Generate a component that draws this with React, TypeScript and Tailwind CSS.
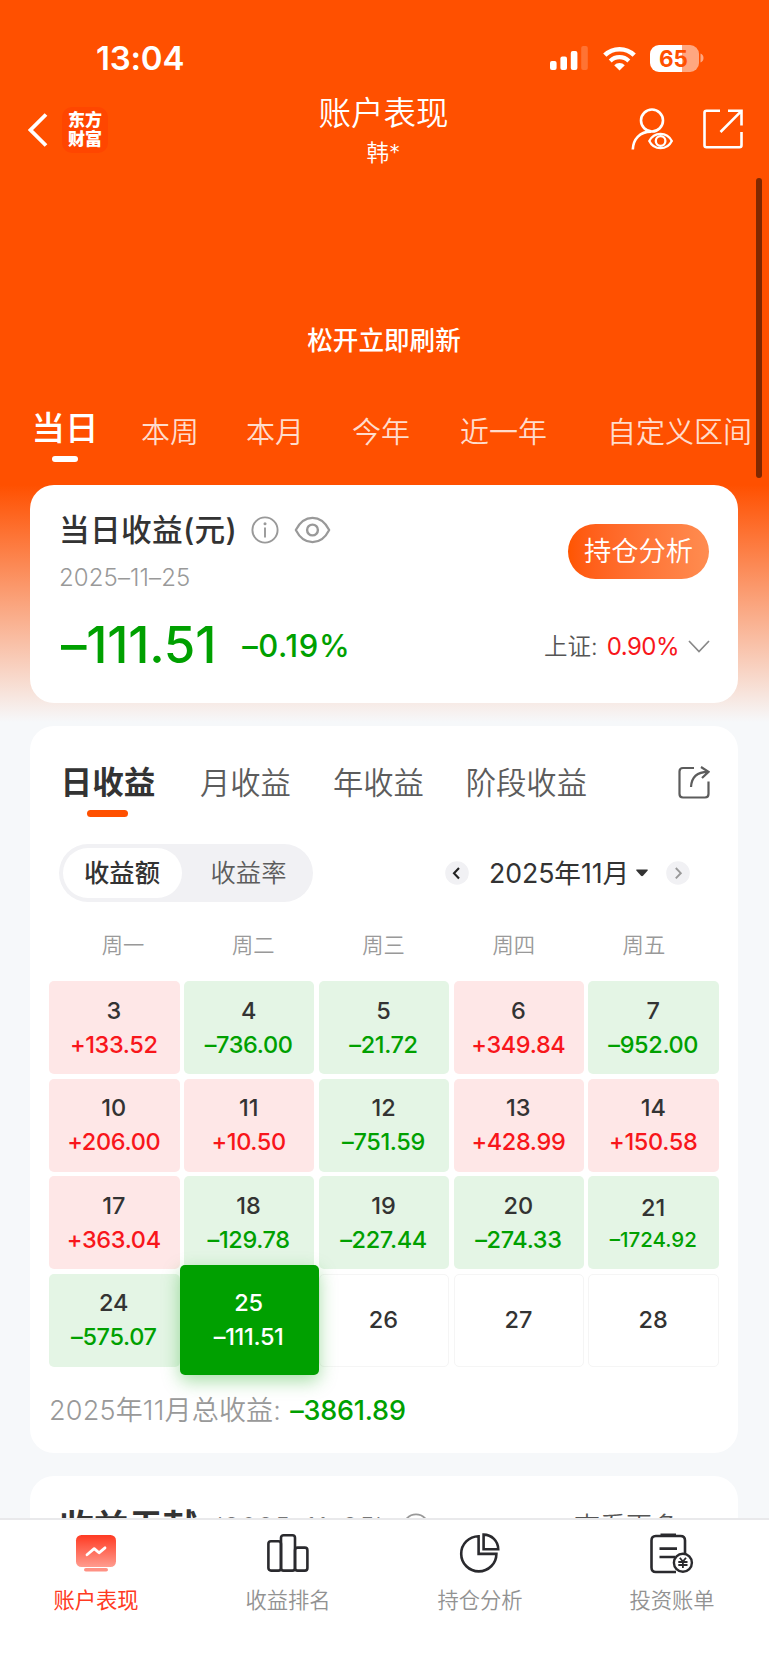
import { useState } from 'react'
import clsx from 'clsx'

type Day = { day: number; value?: string }

const ranges = [
  { label: '本周', className: 'ml-[43px]' },
  { label: '本月', className: 'ml-[47px]' },
  { label: '今年', className: 'ml-[48px]' },
  { label: '近一年', className: 'ml-[50px]' },
  { label: '自定义区间', className: 'ml-[60px]' },
]

const weekdays = ['周一', '周二', '周三', '周四', '周五']

const days: Day[] = [
  { day: 3, value: '+133.52' },
  { day: 4, value: '–736.00' },
  { day: 5, value: '–21.72' },
  { day: 6, value: '+349.84' },
  { day: 7, value: '–952.00' },
  { day: 10, value: '+206.00' },
  { day: 11, value: '+10.50' },
  { day: 12, value: '–751.59' },
  { day: 13, value: '+428.99' },
  { day: 14, value: '+150.58' },
  { day: 17, value: '+363.04' },
  { day: 18, value: '–129.78' },
  { day: 19, value: '–227.44' },
  { day: 20, value: '–274.33' },
  { day: 21, value: '–1724.92' },
  { day: 24, value: '–575.07' },
  { day: 25, value: '–111.51' },
  { day: 26 },
  { day: 27 },
  { day: 28 },
]

function StatusBar() {
  return (
    <div className="flex h-[84px] items-start pt-[40px] pl-[96px] pr-[64px]">
      <span className="text-[33px] leading-[36px] font-semibold tracking-[-0.2px]">13:04</span>
      <div className="ml-auto flex h-[36px] items-center">
        <svg width="38" height="24" viewBox="0 0 38 24" fill="#fff">
          <rect x="0" y="15" width="6.6" height="9" rx="2" />
          <rect x="10.4" y="10.5" width="6.6" height="13.5" rx="2" />
          <rect x="20.8" y="5" width="6.6" height="19" rx="2" />
          <rect x="31.2" y="0" width="6.6" height="24" rx="2" opacity="0.2" />
        </svg>
        <svg className="ml-[15px]" width="33" height="25" viewBox="0 0 33 25" fill="none" stroke="#fff">
          <path d="M1.8 9.2a21 21 0 0 1 29.4 0" strokeWidth="4.6" />
          <path d="M7.2 14.9a13.4 13.4 0 0 1 18.6 0" strokeWidth="4.2" />
          <path d="M11.2 19.2a7.8 7.8 0 0 1 10.6 0L16.5 24.6z" fill="#fff" stroke="none" />
        </svg>
        <div className="ml-[14px] flex h-[27px] w-[49px] items-center justify-center rounded-[9px] bg-[linear-gradient(90deg,#fff_66%,#ffa780_66%)] pr-[2px] text-[22.5px] leading-[27px] font-bold text-[#ff5000]">
          65
        </div>
        <svg className="ml-[1px]" width="4" height="10" viewBox="0 0 4 10">
          <path d="M0.5 0.5C4.5 2 4.5 8 0.5 9.5z" fill="#ffa780" />
        </svg>
      </div>
    </div>
  )
}

function NavBar() {
  return (
    <div className="grid h-[90px] grid-cols-[1fr_auto_1fr] pl-[28px] pr-[25px]">
      <div className="flex items-center pt-[1px]">
        <svg width="20" height="34" viewBox="0 0 20 34" fill="none" stroke="#fff" strokeWidth="3.8">
          <path d="M18 1.5 2.5 17 18 32.5" />
        </svg>
        <div className="ml-[14px] flex h-[46px] w-[46px] flex-col items-center justify-center rounded-[10px] bg-[#ff4600] text-[17px] leading-[19px] font-black">
          <span>东方</span>
          <span>财富</span>
        </div>
      </div>
      <div className="flex flex-col items-center pt-[10px] pr-[4px]">
        <h1 className="text-[32.5px] leading-[40px] font-[350]">账户表现</h1>
        <span className="mt-[4px] text-[22.5px] leading-[30px] font-[350]">韩*</span>
      </div>
      <div className="flex items-center justify-end">
        <svg width="42" height="42" viewBox="0 0 42 42" fill="none" stroke="#fff" strokeWidth="2.6">
          <circle cx="21" cy="12.5" r="11" />
          <path d="M1.8 41.5C2.2 31 9 23.6 20 23.6" />
          <path d="M18.3 33C23 23.4 36 23.4 40.8 33 36 42.6 23 42.6 18.3 33z" strokeWidth="2.3" />
          <circle cx="29.6" cy="33" r="4.8" strokeWidth="2.3" />
        </svg>
        <svg className="ml-[30px]" width="40" height="40" viewBox="0 0 40 40" fill="none" stroke="#fff" strokeWidth="2.6">
          <path d="M17 1.8H3.5Q1.5 1.8 1.5 3.8V36.2Q1.5 38.2 3.5 38.2H36.5Q38.5 38.2 38.5 36.2V23" />
          <path d="M25 1.8H38.5V16.5M38 2.3 17.5 23" />
        </svg>
      </div>
    </div>
  )
}

function InfoIcon() {
  return (
    <svg width="28" height="28" viewBox="0 0 28 28" fill="none" stroke="#999" strokeWidth="1.9">
      <circle cx="14" cy="14" r="12.6" />
      <path d="M14 11.5V21.5" />
      <circle cx="14" cy="7.8" r="1.5" fill="#999" stroke="none" />
    </svg>
  )
}

function SummaryCard() {
  return (
    <section className="mx-[30px] mt-[23px] h-[218px] rounded-[24px] bg-white pl-[29px] pr-[29px]">
      <div className="flex justify-between">
        <div className="pt-[27px]">
          <div className="flex h-[36px] items-center">
            <h2 className="text-[30.7px] leading-[36px] font-medium tracking-[0.3px] text-[#333]">当日收益(元)</h2>
            <div className="ml-[14px]">
              <InfoIcon />
            </div>
            <svg className="ml-[15px]" width="37" height="28" viewBox="0 0 37 28" fill="none" stroke="#999" strokeWidth="2.2">
              <path d="M1.8 14C10-2.2 27-2.2 35.2 14 27 30.2 10 30.2 1.8 14z" strokeLinejoin="round" />
              <circle cx="18.5" cy="14" r="5.4" strokeWidth="2.4" />
            </svg>
          </div>
          <div className="mt-[18px] text-[24px] leading-[24px] font-[350] tracking-[0.1px] text-[#999]">2025–11–25</div>
        </div>
        <button className="mt-[39px] h-[55px] w-[141px] rounded-full bg-linear-to-r from-[#ff5500] to-[#ff8c50] text-[27.3px] leading-[55px] font-[350] text-white">
          持仓分析
        </button>
      </div>
      <div className="mt-[29px] flex h-[50px] items-center pt-[2px] pl-[2px] text-[#00a000]">
        <span className="text-[51px] leading-[50px] font-medium tracking-[-0.2px]">–111.51</span>
        <span className="ml-[26px] pt-[2px] text-[31px] leading-[36px] font-medium tracking-[0.6px]">–0.19%</span>
        <span className="ml-auto pt-[4px] text-[23.5px] leading-[30px] font-[350] text-[#555]">上证:</span>
        <span className="ml-[9px] pt-[4px] text-[24px] leading-[30px] tracking-[-0.5px] text-[#f8161b]">0.90%</span>
        <svg className="mt-[2px] ml-[9px] -mr-[1px]" width="22" height="13" viewBox="0 0 22 13" fill="none" stroke="#888" strokeWidth="1.7">
          <path d="M1 1 11 11.5 21 1" />
        </svg>
      </div>
    </section>
  )
}

function DayCell({ item, selected, onSelect }: { item: Day; selected: boolean; onSelect: () => void }) {
  const up = item.value?.startsWith('+')
  return (
    <button
      onClick={onSelect}
      className={clsx(
        'flex flex-col items-center justify-center rounded-[5px] text-[23.5px] leading-[34px]',
        selected && '-mx-[4.3px] -my-[8.3px] z-10 bg-[#00a000] text-white shadow-[0_6px_18px_rgba(0,160,0,0.35)]',
        !selected && !item.value && 'border border-[#f5f5f5] text-[#333]',
        !selected && item.value && (up ? 'bg-[#fee7e7] text-[#f8161b]' : 'bg-[#e4f5e5] text-[#00a000]'),
      )}
    >
      <span className={clsx('pr-[1px] font-medium', selected ? 'text-white' : 'text-[#333]')}>{item.day}</span>
      {item.value && (
        <span
          className={clsx(
            'pr-[1px] font-medium',
            item.value.length > 7 ? 'text-[20.5px] leading-[30px] tracking-[0px]' : 'tracking-[-0.35px]',
          )}
        >
          {item.value}
        </span>
      )}
    </button>
  )
}

function CalendarCard() {
  const [selected, setSelected] = useState(25)

  return (
    <section className="mx-[30px] mt-[23px] h-[727px] rounded-[24px] bg-white">
      <div className="flex h-[91px] pl-[31px] pr-[28px] pt-[39px] text-[30.3px] leading-[36px] font-[350] whitespace-nowrap text-[#5c5c5c]">
        <div className="flex w-[94px] flex-col items-center">
          <span className="text-[31.6px] font-bold text-[#333]">日收益</span>
          <i className="mt-[9px] -ml-[1px] block h-[7px] w-[41px] rounded-full bg-[#ff5000]" />
        </div>
        <span className="ml-[45px]">月收益</span>
        <span className="ml-[42px]">年收益</span>
        <span className="ml-[42px]">阶段收益</span>
        <svg className="mt-[1px] ml-auto" width="32" height="33" viewBox="0 0 32 33" fill="none" stroke="#5c5c5c" strokeWidth="2.2">
          <path d="M16 2H5Q1.5 2 1.5 5.5V28Q1.5 31.5 5 31.5H27Q30.5 31.5 30.5 28V15.5" />
          <path d="M13 21C13.5 11.5 19 5.8 30 5.8M23 1 30.5 5.8 24 12" />
        </svg>
      </div>

      <div className="mt-[27px] flex h-[58px] items-center pl-[29px] pr-[48px]">
        <div className="flex h-[58px] w-[254px] items-center rounded-full bg-[#f1f1f4] pl-[4px] text-[25.3px] leading-[50px]">
          <span className="h-[50px] w-[119px] rounded-full bg-white pr-[1px] text-center font-medium text-[#333]">收益额</span>
          <span className="flex-1 pl-[2px] text-center font-[350] text-[#5c5c5c]">收益率</span>
        </div>
        <svg className="ml-auto" width="24" height="24" viewBox="0 0 24 24" fill="none">
          <circle cx="12" cy="12" r="11.8" fill="#f1f1f4" />
          <path d="M14 7 9 12.2 14 17.4" stroke="#222" strokeWidth="2.1" />
        </svg>
        <span className="ml-[20px] text-[26.7px] leading-[36px] tracking-[-0.1px] text-[#333]">2025年11月</span>
        <svg className="ml-[7px]" width="12" height="8" viewBox="0 0 12 8" fill="#333">
          <path d="M0.6 0.5H11.4Q12.2 1 11.5 1.8L7 6.7Q6 7.6 5 6.7L0.5 1.8Q-0.2 1 0.6 0.5z" />
        </svg>
        <svg className="ml-[18px]" width="24" height="24" viewBox="0 0 24 24" fill="none">
          <circle cx="12" cy="12" r="11.8" fill="#f1f1f4" />
          <path d="M9.8 7 14.8 12.2 9.8 17.4" stroke="#999" strokeWidth="1.9" />
        </svg>
      </div>

      <div className="mr-[29px] ml-[28px] mt-[27px] grid grid-cols-5 text-center text-[21.3px] leading-[32px] font-[350] text-[#999]">
        {weekdays.map((d) => (
          <span key={d}>{d}</span>
        ))}
      </div>

      <div className="mx-[19px] mt-[20px] grid auto-rows-[93.3px] grid-cols-5 gap-[4.3px]">
        {days.map((d) => (
          <DayCell key={d.day} item={d} selected={d.day === selected} onSelect={() => setSelected(d.day)} />
        ))}
      </div>

      <div className="mt-[26px] flex items-center pl-[19px] text-[27px] leading-[36px]">
        <span className="font-[350] tracking-[0.2px] text-[#999]">2025年11月总收益:</span>
        <span className="ml-[9px] font-medium tracking-[-0.2px] text-[#00a000]">–3861.89</span>
      </div>
    </section>
  )
}

function TabBar() {
  const items = [
    {
      label: '账户表现',
      icon: (
        <svg width="42" height="42" viewBox="0 0 42 42" fill="none">
          <defs>
            <linearGradient id="tabActive" x1="0" y1="0" x2="0" y2="1">
              <stop offset="0" stopColor="#ff3a22" />
              <stop offset="1" stopColor="#ff9c8f" />
            </linearGradient>
          </defs>
          <rect x="1" y="2" width="40" height="32" rx="5.5" fill="url(#tabActive)" />
          <rect x="9" y="35" width="24" height="3.6" rx="1.8" fill="#ff9184" />
          <path d="M12 21.8 19.2 15.6 24 19.8 30 14.8" stroke="#fff" strokeWidth="2.8" strokeLinecap="round" strokeLinejoin="round" />
        </svg>
      ),
    },
    {
      label: '收益排名',
      icon: (
        <svg width="42" height="42" viewBox="0 0 42 42" fill="none" stroke="#2a2a2e" strokeWidth="2.6">
          <rect x="1.4" y="8.2" width="12.6" height="29.4" rx="2.6" />
          <rect x="14" y="2.2" width="14" height="35.4" rx="2.6" />
          <rect x="28" y="14.6" width="12.4" height="23" rx="2.6" />
        </svg>
      ),
    },
    {
      label: '持仓分析',
      icon: (
        <svg width="42" height="42" viewBox="0 0 42 42" fill="none" stroke="#2a2a2e" strokeWidth="2.6">
          <path d="M19.6 3.2A17.6 17.6 0 1 0 37.4 20.9H19.6z" />
          <path d="M24.6 1.6A14.6 14.6 0 0 1 39.2 16.2H24.6z" />
        </svg>
      ),
    },
    {
      label: '投资账单',
      icon: (
        <svg width="44" height="42" viewBox="0 0 44 42" fill="none" stroke="#2a2a2e" strokeWidth="2.6">
          <path d="M26 39H5.8Q1.5 39 1.5 34.5V7.5Q1.5 3 5.8 3H30.5Q35 3 35 7.5V22" />
          <path d="M10.5 2.2H26" strokeWidth="3.4" />
          <path d="M9.5 15.6H27M9.5 24H25" strokeWidth="2.6" />
          <circle cx="32.9" cy="29.8" r="9" strokeWidth="2.4" />
          <path d="M29.8 24.8 32.9 28.6 36 24.8M32.9 28.6V35M28.3 29H37.5M28.3 32H37.5" strokeWidth="1.8" />
        </svg>
      ),
    },
  ]

  return (
    <nav className="absolute inset-x-0 bottom-0 z-20 grid h-[147px] grid-cols-4 border-t-2 border-[#e9e9eb] bg-white pr-px">
      {items.map((item, i) => (
        <div key={item.label} className="flex flex-col items-center pt-[13px]">
          {item.icon}
          <span
            className={clsx(
              'mt-[9px] text-[21.3px] leading-[32px]',
              i === 0 ? 'text-[#ff3a22]' : 'font-[350] text-[#929292]',
            )}
          >
            {item.label}
          </span>
        </div>
      ))}
    </nav>
  )
}

export default function App() {
  return (
    <div className="relative h-[1665px] w-[769px] overflow-hidden bg-[#f6f8fa] bg-[linear-gradient(180deg,#ff5000_0,#ff5000_485px,#f6f8fa_722px)] pr-px font-['Inter','Noto_Sans_CJK_SC',sans-serif]">
      <header className="text-white">
        <StatusBar />
        <NavBar />
        <p className="mt-[152px] text-center text-[25.6px] leading-[30px] font-medium">松开立即刷新</p>
        <div className="flex pt-[53px] pl-[32px] text-[29px] leading-[36px] font-[350] whitespace-nowrap">
          <div className="flex w-[66px] flex-col items-center">
            <span className="mt-[1px] text-[33.5px] font-medium">当日</span>
            <i className="mt-[10px] block h-[6px] w-[26px] rounded-full bg-white" />
          </div>
          {ranges.map((r) => (
            <span key={r.label} className={clsx('pt-[6px] text-[#ffdccc]', r.className)}>
              {r.label}
            </span>
          ))}
        </div>
      </header>

      <SummaryCard />
      <CalendarCard />

      {/* Contribution card, partly under the tab bar */}
      <section className="mx-[30px] mt-[23px] h-[220px] rounded-[24px] bg-white pl-[29px] pr-[36px] pt-[31px]">
        <div className="flex items-center leading-[40px]">
          <h2 className="text-[34.7px] font-bold text-[#333]">收益贡献</h2>
          <span className="ml-[16px] text-[25px] font-[350] tracking-[1.6px] text-[#777]">(2025–11–25)</span>
          <div className="ml-[16px]">
            <InfoIcon />
          </div>
          <span className="ml-auto text-[26px] font-[350] text-[#555]">查看更多</span>
          <svg className="mt-[2px] ml-[14px]" width="10" height="18" viewBox="0 0 10 18" fill="none" stroke="#999" strokeWidth="1.8">
            <path d="M1 1 9 9 1 17" />
          </svg>
        </div>
      </section>

      {/* Scroll indicator */}
      <div className="absolute top-[178px] right-[7px] h-[300px] w-[6px] rounded-full bg-[#802800]" />

      <TabBar />
    </div>
  )
}
